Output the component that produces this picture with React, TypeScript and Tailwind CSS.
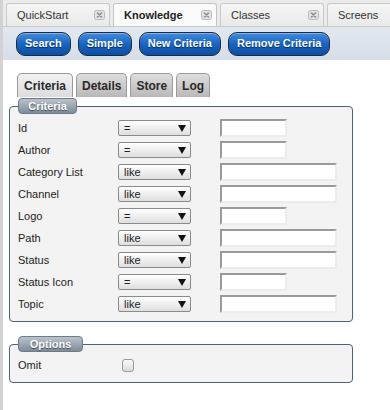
import React from "react";

const font = "font-['Liberation_Sans',Arial,Helvetica,sans-serif]";

function CloseIcon() {
  return (
    <svg width="11" height="10" viewBox="0 0 11 10" className="shrink-0">
      <rect x="0.5" y="0.5" width="10" height="9" rx="2" fill="#e4e4e4" stroke="#b9b9b9" />
      <path d="M3.5 3 L7.5 7 M7.5 3 L3.5 7" stroke="#8c8c8c" strokeWidth="1.6" strokeLinecap="round" />
    </svg>
  );
}

function TopTab({ label, active }: { label: string; active?: boolean }) {
  return (
    <div
      className={
        "w-[104px] h-[23px] shrink-0 flex items-center justify-between pl-[10px] pr-[4px] rounded-t-[3px] border border-b-0 " +
        (active
          ? "bg-[#fbfbfb] border-[#c4c4c4] font-bold text-[#222]"
          : "bg-gradient-to-b from-[#f6f6f6] to-[#e9e9e9] border-[#c9c9c9] text-[#333]")
      }
    >
      <span className="text-[11px] leading-none">{label}</span>
      <CloseIcon />
    </div>
  );
}

function BlueButton({ label }: { label: string }) {
  return (
    <button className="h-[24px] px-[8px] rounded-[9px] border-[1.5px] border-[#1e2a38] bg-gradient-to-b from-[#3d8de2] via-[#1765c4] to-[#0a4ea4] text-white font-bold text-[11px] leading-none [text-shadow:0_1px_1px_rgba(0,0,0,0.6)] shadow-[inset_0_1px_0_rgba(255,255,255,0.35)]">
      {label}
    </button>
  );
}

function SubTab({ label, active }: { label: string; active?: boolean }) {
  return (
    <div
      className={
        "h-[24px] flex items-center rounded-t-[5px] border border-b-0 border-[#9a9a9a] text-[12px] font-bold text-[#2a2a2a] " +
        (active
          ? "px-[6px] bg-gradient-to-b from-[#f2f2f2] to-[#dcdcdc]"
          : "px-[5px] bg-gradient-to-b from-[#dedede] to-[#b8b8b8]")
      }
    >
      {label}
    </div>
  );
}

function Legend({ label, w }: { label: string; w: string }) {
  return (
    <legend
      className={
        w +
        " h-[16px] flex items-center justify-center rounded-[4px] border border-[#6d7b89] bg-gradient-to-b from-[#bac3cc] to-[#7f8d9a] text-white font-bold text-[11px] leading-none [text-shadow:0_1px_1px_rgba(0,0,0,0.55)]"
      }
    >
      {label}
    </legend>
  );
}

function Select({ value }: { value: string }) {
  return (
    <div className="w-[73px] h-[16px] flex items-center justify-between pl-[5px] pr-[4px] border border-[#8a8a8a] rounded-[2px] bg-gradient-to-b from-[#ffffff] to-[#dedede] text-[11px] text-[#222]">
      <span className="leading-none">{value}</span>
      <svg width="8" height="7" viewBox="0 0 8 7">
        <path d="M0 0 H8 L4 7 Z" fill="#111" />
      </svg>
    </div>
  );
}

function Input({ long }: { long?: boolean }) {
  return (
    <div
      className={
        (long ? "w-[117px]" : "w-[67px]") +
        " h-[18px] bg-white border-2 border-t-[#9a9a9a] border-l-[#9a9a9a] border-b-[#ececec] border-r-[#ececec]"
      }
    />
  );
}

const rows: { label: string; op: string; long: boolean }[] = [
  { label: "Id", op: "=", long: false },
  { label: "Author", op: "=", long: false },
  { label: "Category List", op: "like", long: true },
  { label: "Channel", op: "like", long: true },
  { label: "Logo", op: "=", long: false },
  { label: "Path", op: "like", long: true },
  { label: "Status", op: "like", long: true },
  { label: "Status Icon", op: "=", long: false },
  { label: "Topic", op: "like", long: true },
];

export default function App() {
  return (
    <div className={"w-[390px] h-[410px] bg-white flex overflow-hidden " + font}>
      <div className="w-[3px] shrink-0 bg-[#d2d2d2]" />
      <div className="flex-1 flex flex-col min-w-0">
        {/* top tab strip */}
        <div className="h-[27px] shrink-0 bg-[#ebebeb] border-b border-[#c9c9c9] flex items-end pl-[3px] gap-[3px] overflow-hidden">
          <TopTab label="QuickStart" />
          <TopTab label="Knowledge" active />
          <TopTab label="Classes" />
          <TopTab label="Screens" />
        </div>
        {/* toolbar */}
        <div className="h-[33px] shrink-0 bg-gradient-to-b from-[#e3e8ef] to-[#d7dee8] flex items-center pl-[13px] gap-[7px]">
          <BlueButton label="Search" />
          <BlueButton label="Simple" />
          <BlueButton label="New Criteria" />
          <BlueButton label="Remove Criteria" />
        </div>
        {/* content */}
        <div className="pt-[13px] pl-[6px]">
          <div className="flex gap-[3px] pl-[8px]">
            <SubTab label="Criteria" active />
            <SubTab label="Details" />
            <SubTab label="Store" />
            <SubTab label="Log" />
          </div>
          <fieldset className="mt-[1px] w-[344px] border border-[#4d617a] rounded-[4px] bg-[#f3f3f3] pl-[8px] pr-[8px] pt-[3px] pb-[6px]">
            <Legend label="Criteria" w="w-[59px]" />
            {rows.map((r) => (
              <div key={r.label} className="h-[22px] flex items-center">
                <div className="w-[100px] text-[11px] text-[#222]">{r.label}</div>
                <Select value={r.op} />
                <div className="w-[29px]" />
                <Input long={r.long} />
              </div>
            ))}
          </fieldset>
          <fieldset className="mt-[14px] w-[344px] border border-[#4d617a] rounded-[4px] bg-[#f3f3f3] pl-[8px] pr-[8px] pt-[2px] pb-[6px]">
            <Legend label="Options" w="w-[65px]" />
            <div className="h-[22px] flex items-center">
              <div className="w-[104px] text-[11px] text-[#222]">Omit</div>
              <div className="w-[12px] h-[13px] rounded-[3px] border border-[#9a9a9a] bg-gradient-to-b from-[#fafafa] to-[#dcdcdc]" />
            </div>
          </fieldset>
        </div>
      </div>
    </div>
  );
}
